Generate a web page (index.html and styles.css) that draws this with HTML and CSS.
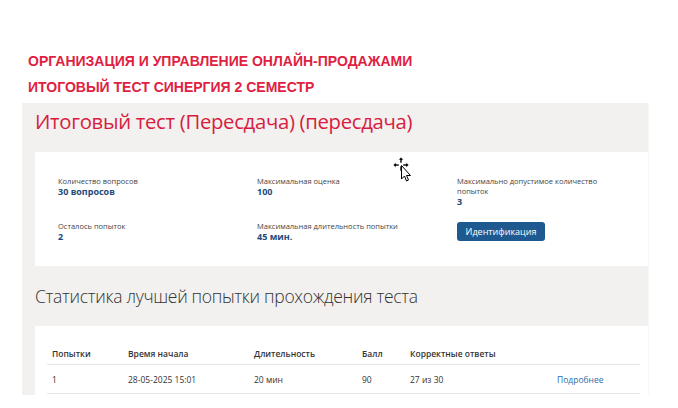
FILE: index.html
```html
<!DOCTYPE html>
<html lang="ru">
<head>
<meta charset="utf-8">
<link rel="stylesheet" href="styles.css">
</head>
<body>
<div class="top">
  <div class="course">ОРГАНИЗАЦИЯ И УПРАВЛЕНИЕ ОНЛАЙН-ПРОДАЖАМИ</div>
  <div class="course">ИТОГОВЫЙ ТЕСТ СИНЕРГИЯ 2 СЕМЕСТР</div>
</div>
<div class="wrap">
  <div class="panel">
    <h1 class="title">Итоговый тест (Пересдача) (пересдача)</h1>
    <div class="card info">
      <div class="item">
        <div class="label">Количество вопросов</div>
        <div class="value">30 вопросов</div>
      </div>
      <div class="item">
        <div class="label">Максимальная оценка</div>
        <div class="value">100</div>
      </div>
      <div class="item">
        <div class="label">Максимально допустимое количество<br>попыток</div>
        <div class="value">3</div>
      </div>
      <div class="item">
        <div class="label">Осталось попыток</div>
        <div class="value">2</div>
      </div>
      <div class="item">
        <div class="label">Максимальная длительность попытки</div>
        <div class="value">45 мин.</div>
      </div>
      <div class="item">
        <button class="btn">Идентификация</button>
      </div>
    </div>
    <h2 class="subtitle">Статистика лучшей попытки прохождения теста</h2>
    <div class="card stats">
      <table class="tbl">
        <thead>
          <tr><th>Попытки</th><th>Время начала</th><th>Длительность</th><th>Балл</th><th>Корректные ответы</th><th></th></tr>
        </thead>
        <tbody>
          <tr><td>1</td><td>28-05-2025 15:01</td><td>20 мин</td><td>90</td><td>27 из 30</td><td><a class="more">Подробнее</a></td></tr>
        </tbody>
      </table>
    </div>
  </div>
</div>
<div class="cursor">
  <svg width="22" height="28" viewBox="0 0 22 28">
    <g fill="#000" stroke="#fff" stroke-width="0.6">
      <path d="M8 0 L10.5 3 L9 3 L9 6 L7 6 L7 3 L5.5 3 Z"/>
      <path d="M0 8 L3 5.5 L3 7 L6 7 L6 9 L3 9 L3 10.5 Z"/>
      <path d="M16 8 L13 5.5 L13 7 L10 7 L10 9 L13 9 L13 10.5 Z"/>
      <path d="M7 9 L7 14 L9 14 L9 9 Z"/>
    </g>
    <path d="M8.5 8.5 L8.5 22 L11.5 19 L13.5 24 L15.5 23 L13.5 18.5 L17.5 18.5 Z" fill="#fff" stroke="#000" stroke-width="1"/>
  </svg>
</div>
</body>
</html>
```

FILE: styles.css
```css
html, body {
  margin: 0;
  padding: 0;
  background: #ffffff;
}
body {
  font-family: "Open Sans", "Noto Sans", sans-serif;
  color: #333;
  position: relative;
  width: 678px;
  height: 408px;
  overflow: hidden;
}
.top {
  padding: 48px 0 0 28px;
  box-sizing: border-box;
  height: 103px;
}
.course {
  font-family: "Liberation Sans", Arial, sans-serif;
  font-weight: bold;
  font-size: 14px;
  line-height: 26px;
  color: #e0213f;
}
.wrap {
  margin-left: 22px;
  width: 630px;
}
.panel {
  background: #f2f1ef;
  width: 627px;
  padding: 5px 0 0 13px;
  box-sizing: border-box;
  height: 292px;
  border-right: 1px solid #f6f6f4;
}
.title {
  margin: 0;
  font-weight: 400;
  font-size: 20.3px;
  line-height: 26px;
  color: #d81c40;
  letter-spacing: -0.3px;
  height: 44px;
}
.card {
  background: #fff;
}
.info {
  height: 114px;
  box-sizing: border-box;
  padding: 24px 0 0 23px;
  display: grid;
  grid-template-columns: 199px 200px 160px;
  grid-template-rows: 45px 40px;
}
.label {
  font-size: 7.5px;
  line-height: 10px;
  color: #444;
}
.value {
  font-size: 9px;
  line-height: 11px;
  font-weight: 700;
  color: #1d4a78;
}
.btn {
  display: block;
  margin-top: 1px;
  font-family: "Open Sans", "Noto Sans", sans-serif;
  font-size: 9px;
  color: #fff;
  background: #1e5a8f;
  border: 0;
  border-radius: 3px;
  width: 88px;
  height: 19px;
  padding: 0;
  font-weight: 400;
}
.subtitle {
  margin: 0;
  font-weight: 300;
  font-size: 17.5px;
  letter-spacing: -0.3px;
  color: #333;
  line-height: 22px;
  padding-top: 19px;
  height: 41px;
}
.stats {
  height: 70px;
  padding: 16px 12px 0 12px;
  box-sizing: border-box;
}
.tbl {
  border-collapse: collapse;
  width: 593px;
  font-size: 8.5px;
  color: #333;
}
.tbl th {
  font-weight: 600;
  text-align: left;
  height: 22px;
  padding: 0 0 0 5px;
  border-bottom: 1px solid #e6e6e6;
}
.tbl td {
  height: 28px;
  padding: 0 0 0 5px;
  border-bottom: 1px solid #e6e6e6;
}
.tbl th:nth-child(1) { width: 71px; }
.tbl th:nth-child(2) { width: 121px; }
.tbl th:nth-child(3) { width: 103px; }
.tbl th:nth-child(4) { width: 43px; }
.tbl th:nth-child(5) { width: 142px; }
.more {
  color: #2d6ca5;
}
.cursor {
  position: absolute;
  left: 393px;
  top: 157px;
}
```
